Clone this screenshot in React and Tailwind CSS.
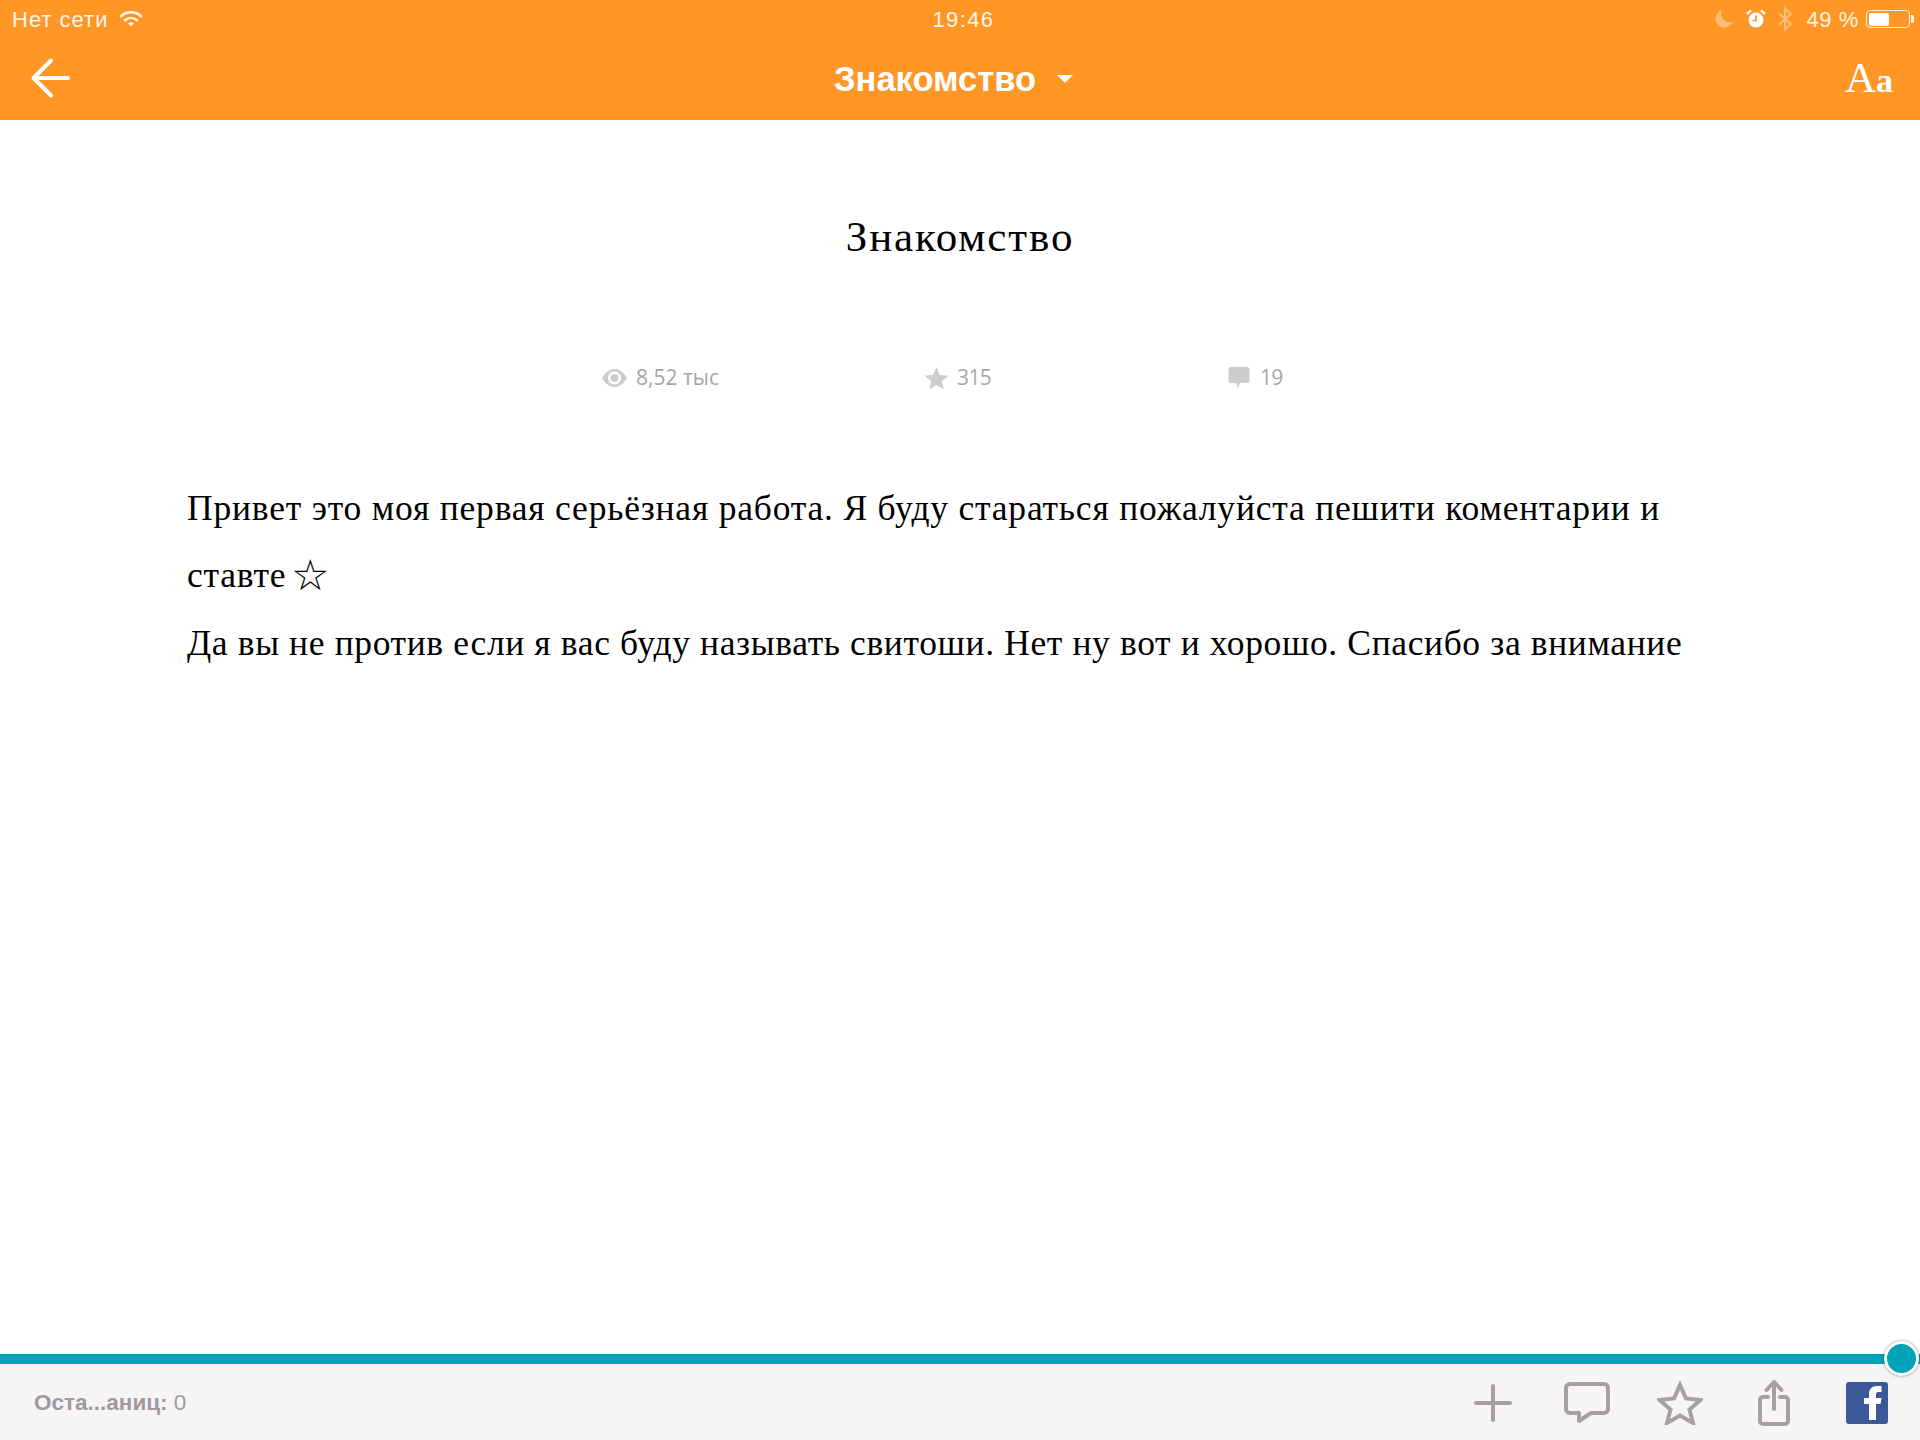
const sans = 'font-["Liberation_Sans",Arial,sans-serif]';

function StatusBar() {
  return (
    <div className={`h-[40px] pl-[12px] pr-[10px] pb-[2px] grid grid-cols-3 items-center text-[22px] text-white/90 ${sans}`}>
      <div className="flex items-center gap-[11px] tracking-[1px]">
        <span>Нет сети</span>
        <svg width="24" height="18" viewBox="0 0 24 18" fill="none" stroke="currentColor" strokeWidth="2.6" strokeLinecap="round">
          <path d="M2 6.2C8 1 16 1 22 6.2" />
          <path d="M6 10.2C9.6 7.2 14.400 7.2 18 10.2" />
          <path d="M12 16.500 9 13.400C10.800 12 13.200 12 15 13.400Z" fill="currentColor" stroke="none" />
        </svg>
      </div>
      <div className="text-center tracking-[1.400px] pl-[5px]">19:46</div>
      <div className="flex items-center justify-end">
        <svg width="20" height="20" viewBox="0 0 20 20" className="mr-[12px] opacity-40" fill="currentColor">
          <path d="M8 1a9 9 0 1 0 11 11.500A8.500 8.500 0 0 1 8 1Z" />
        </svg>
        <svg width="20" height="20" viewBox="0 0 20 20" className="mr-[11px]" fill="none">
          <circle cx="10" cy="11" r="7.500" fill="white" />
          <path d="M10 6.500V11.500H6.500" stroke="#ff9626" strokeWidth="1.700" />
          <path d="M1 5 5 1.400M19 5 15 1.400" stroke="white" strokeWidth="2.400" />
        </svg>
        <svg width="16" height="24" viewBox="0 0 16 24" className="mr-[13px] opacity-40" fill="none" stroke="white" strokeWidth="2">
          <path d="M2 6.500 14 17 8 22.500V1.500L14 7 2 17.500" />
        </svg>
        <span className="tracking-[0.6px] mr-[7px]">49 %</span>
        <div className="w-[44px] h-[18px] border border-white/80 rounded-[4px] p-[1.500px] relative">
          <div className="w-[20px] h-full bg-white rounded-[2px]" />
          <div className="absolute right-[-5px] top-[4px] w-[3px] h-[8px] bg-white/90 rounded-r-[2px]" />
        </div>
      </div>
    </div>
  );
}

function TopBar() {
  return (
    <div className="h-[80px] pl-[30px] pr-[27px] grid grid-cols-3 items-start text-white">
      <svg width="42" height="42" viewBox="0 0 42 42" fill="none" stroke="currentColor" strokeWidth="4" strokeLinecap="round" strokeLinejoin="round" className="mt-[17px]">
        <path d="M4 21H38M21 3.500 3.500 21 21 38.500" />
      </svg>
      <div className="flex items-center justify-center gap-[21px] mt-[15px] pr-[16px]">
        <span className={`text-[34.500px] leading-[48px] font-bold whitespace-nowrap ${sans}`}>Знакомство</span>
        <div className="w-0 h-0 border-x-[8px] border-x-transparent border-t-[8px] border-t-white" />
      </div>
      <div className='text-right text-[43px] leading-[48px] mt-[14px] font-["Liberation_Serif",serif]'>
        A<span className="font-bold text-[34px]">a</span>
      </div>
    </div>
  );
}

function Stat({ icon, text, className, textClass }) {
  return (
    <div className={`flex items-center absolute top-0 h-full ${className}`}>
      {icon}
      <span className={`text-[21px] text-[#aaa5a5] font-["Open_Sans",sans-serif] whitespace-nowrap ${textClass}`}>{text}</span>
    </div>
  );
}

function Stats() {
  return (
    <div className="relative h-[40px] mt-[96px]">
      <Stat
        className="left-[601px] gap-[8px]"
        textClass="tracking-[0px]"
        text="8,52 тыс"
        icon={
          <svg width="27" height="22" viewBox="0 0 27 22">
            <path d="M1 11C5 4.500 9 2 13.500 2S22 4.500 26 11C22 17.500 18 20 13.500 20S5 17.500 1 11Z" fill="#cfcccd" />
            <circle cx="13.500" cy="11" r="6.500" fill="#fff" />
            <circle cx="13.500" cy="11" r="4" fill="#cfcccd" />
          </svg>
        }
      />
      <Stat
        className="left-[924px] gap-[8px]"
        textClass="tracking-[-0.600px]"
        text="315"
        icon={
          <svg width="25" height="25" viewBox="0 0 24 24" fill="#cfcccd">
            <path d="M12 1l3.200 7.600 8 .7-6.100 5.300 1.900 8L12 18.300 5 22.600l1.900-8L.8 9.300l8-.7Z" />
          </svg>
        }
      />
      <Stat
        className="left-[1228px] gap-[10px]"
        textClass="tracking-[-0.800px]"
        text="19"
        icon={
          <svg width="22" height="24" viewBox="0 0 22 24" fill="#cfcccd">
            <path d="M3 1h16a2.500 2.500 0 0 1 2.500 2.500v11A2.500 2.500 0 0 1 19 17h-7l-2.500 5.500L8.500 17H3A2.500 2.500 0 0 1 .5 14.500v-11A2.500 2.500 0 0 1 3 1Z" />
          </svg>
        }
      />
    </div>
  );
}

function BottomBar() {
  return (
    <div className="relative">
      <div className="h-[10px] bg-[#00a3b8]" />
      <div className="absolute right-[1px] top-[-13px] w-[35px] h-[35px] rounded-full bg-[#00a3b8] border-[3px] border-white shadow-[0_0_3px_rgba(0,0,0,0.45)]" />
      <div className={`h-[76px] bg-[#f6f4f6] pl-[34px] pr-[32px] flex items-center justify-between ${sans}`}>
        <div className="text-[22.500px] text-[#a09b9b] mt-[2px]">
          <span className="font-bold">Оста...аниц:</span> 0
        </div>
        <div className="flex items-center mt-[1px] text-[#a5a1a1]">
          <svg width="38" height="38" viewBox="0 0 38 38" stroke="currentColor" strokeWidth="4" strokeLinecap="round" className="mr-[52px]">
            <path d="M19 2v34M2 19h34" />
          </svg>
          <svg width="46" height="42" viewBox="0 0 46 42" fill="none" stroke="currentColor" strokeWidth="4" strokeLinejoin="round" className="mr-[47px]">
            <path d="M6 2h34a4 4 0 0 1 4 4v21a4 4 0 0 1-4 4H27l-12 8v-8H6a4 4 0 0 1-4-4V6a4 4 0 0 1 4-4Z" />
          </svg>
          <svg width="46" height="44" viewBox="0 0 46 44" fill="none" stroke="currentColor" strokeWidth="4" className="mr-[55px]">
            <path d="M23 4l6 13.500 14.500 1.500-11 9.500L36 42 23 34.500 10 42l3.500-13.500-11-9.500L17 17.500Z" />
          </svg>
          <svg width="32" height="46" viewBox="0 0 32 46" fill="none" stroke="currentColor" strokeWidth="4" strokeLinecap="round" strokeLinejoin="round" className="mr-[56px]">
            <path d="M10 17H5a3 3 0 0 0-3 3v21a3 3 0 0 0 3 3h22a3 3 0 0 0 3-3V20a3 3 0 0 0-3-3h-5" />
            <path d="M16 29V3M8.500 10 16 2l7.500 8" />
          </svg>
          <svg width="42" height="42" viewBox="0 0 42 42">
            <rect width="42" height="42" rx="3" fill="#3b5998" />
            <path d="M23 38V22h-5v-6h5v-4c0-5 3-8 8-8h4.500v6H32c-1.500 0-2 1-2 2.500V16h5.500l-1 6H30v16Z" fill="#fff" />
          </svg>
        </div>
      </div>
    </div>
  );
}

export default function App() {
  return (
    <div className="min-h-[1440px] flex flex-col bg-white">
      <div className="bg-[#ff9626]">
        <StatusBar />
        <TopBar />
      </div>
      <div className='flex-1 font-["Liberation_Serif",serif] text-black'>
        <h1 className="text-[43px] leading-[50px] font-normal text-center mt-[92px] tracking-[1.900px]">Знакомство</h1>
        <Stats />
        <div className="mt-[77px] px-[187px] text-[35.500px] leading-[67.300px] tracking-[0.630px]">
          <p className="tracking-[0.800px]">
            Привет это моя первая серьёзная работа. Я буду стараться пожалуйста пешити коментарии и
            <br />
            ставте<span className="text-[16px] leading-none"> </span><span className="text-[43px] leading-none align-[-3px]">☆</span>
          </p>
          <p>Да вы не против если я вас буду называть свитоши. Нет ну вот и хорошо. Спасибо за внимание</p>
        </div>
      </div>
      <BottomBar />
    </div>
  );
}
